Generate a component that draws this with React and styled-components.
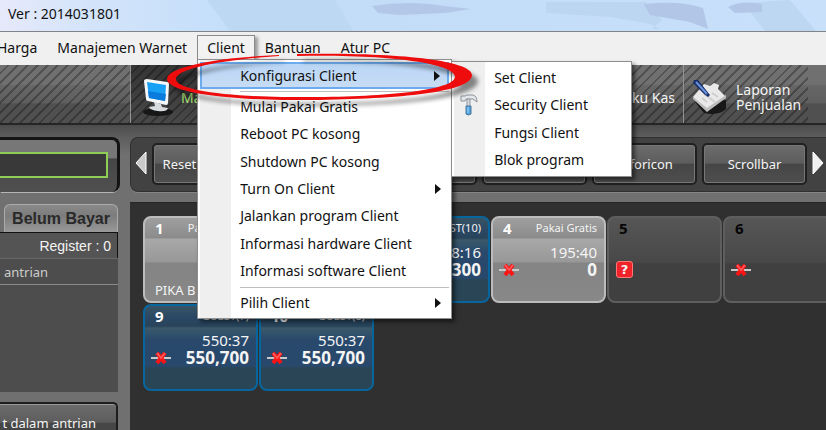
import React from "react";
import styled, { createGlobalStyle, css } from "styled-components";

const Global = createGlobalStyle`
  * { box-sizing: border-box; }
  body { margin: 0; overflow: hidden; background: #303030; }
  button, input { font: inherit; color: inherit; margin: 0; }
  svg { flex: none; }
`;

const Window = styled.div`
  min-height: 100vh;
  display: flex;
  flex-direction: column;
  font-family: "Noto Sans", "Open Sans", sans-serif;
  font-size: 14px;
  color: #111;
  overflow: hidden;
`;

const TitleBar = styled.header`
  position: relative;
  height: 32px;
  padding: 4px 8px;
  line-height: 20px;
  background: linear-gradient(90deg, #e6e9fa 0, #d3e4fa 90px, #c6dffa 210px, #c2dbf6 260px, #c8e0fa 100%);
  border-bottom: 1px solid #808488;
`;

const TitleGlass = styled.svg`
  position: absolute;
  inset: 0;
  width: 100%;
  height: 31px;
`;

const TitleText = styled.span`
  position: relative;
`;

const MenuBar = styled.nav`
  display: flex;
  align-items: flex-start;
  height: 33px;
  padding-top: 3px;
  background: #f0f0f0;
`;

const MenuSlot = styled.div`
  position: relative;
`;

const MenuButton = styled.button`
  height: 26px;
  padding: 0 9px;
  border: 1px solid transparent;
  background: none;
  line-height: 24px;
  white-space: nowrap;
  ${(p) => p.$clipped && css`padding-left: 0; margin-left: -4px;`}
  ${(p) => p.$open && css`
    border-color: #8a8a8a;
    border-bottom-color: #f2f2f2;
    background: #f2f2f2;
    box-shadow: 3px 2px 3px rgba(0, 0, 0, 0.35);
  `}
`;

const Menu = styled.div`
  position: absolute;
  top: 24px;
  left: 0;
  z-index: 5;
  width: 255px;
  padding: 2px;
  border: 1px solid #8e8e8e;
  background: linear-gradient(90deg, #fff 2px, #efefef 2px 33px, #fff 33px);
  box-shadow: 3px 3px 4px rgba(0, 0, 0, 0.5);
`;

const SubMenu = styled(Menu)`
  top: 1px;
  left: 253px;
  width: 181px;
`;

const MenuGroup = styled.div`
  display: grid;
  grid-auto-rows: 1fr;
  height: ${(p) => p.$height}px;
`;

const MenuItem = styled.button`
  display: flex;
  align-items: center;
  width: 100%;
  padding: 0 7px 0 0;
  border: 1px solid transparent;
  background: none;
  line-height: 20px;
  text-align: left;
  white-space: nowrap;
  ${(p) => p.$active && css`
    border: 2px solid #6cabee;
    background: linear-gradient(#bad6f6, #c7dcf4);
  `}
`;

const Gutter = styled.span`
  display: grid;
  place-items: center;
  flex: none;
  width: ${(p) => (p.$active ? 38 : 39)}px;
`;

const SubGutter = styled(Gutter)`
  width: 39px;
  padding-right: 12px;
`;

const ItemLabel = styled.span`
  flex: 1;
`;

const Separator = styled.hr`
  height: 1px;
  margin: 2px 0 1px 40px;
  border: 0;
  background: #bdbdbd;
`;

const Callout = styled.svg`
  position: absolute;
  top: -12px;
  left: -37px;
  z-index: 8;
  width: 330px;
  height: 64px;
  pointer-events: none;
  filter: drop-shadow(6px 6px 2px rgba(0, 0, 0, 0.45));
`;

const stripes = "repeating-linear-gradient(135deg, transparent 0 5px, rgba(0,0,0,0.28) 5px 7px)";

const Toolbar = styled.div`
  display: flex;
  height: 60px;
  background: linear-gradient(#707070 0 33%, #666 36%, #5f5f5f 65%, #505050 67%);
  border-bottom: 2px solid #252525;
  color: #f4f4f4;
`;

const ToolSpace = styled.div`
  width: ${(p) => (p.$width ? `${p.$width}px` : "auto")};
  flex: ${(p) => (p.$width ? "none" : "1")};
  background: ${(p) => (p.$plain ? "none" : stripes)};
`;

const ToolButton = styled.button`
  display: flex;
  align-items: center;
  gap: 8px;
  flex: none;
  width: ${(p) => p.$width}px;
  padding: 6px 8px 0;
  border: 0;
  border-left: 1px solid #929292;
  background: ${stripes};
  line-height: 15px;
  text-align: left;
  ${(p) => p.$active && css`
    gap: 4px;
    padding-left: 12px;
    color: #a5df6f;
    background: ${stripes}, linear-gradient(#353535, #484848);
  `}
  ${(p) => p.$end && css`justify-content: flex-end;`}
`;

const Body = styled.main`
  flex: 1;
  display: grid;
  grid-template-columns: 130px minmax(0, 1fr);
  background: linear-gradient(#4c4c4c, #5d5d5d 12px, #707070 30px);
  color: #f4f4f4;
`;

const Sidebar = styled.aside`
  display: flex;
  flex-direction: column;
  padding: 12px 10px 0 0;
`;

const SearchPanel = styled.label`
  display: block;
  height: 55px;
  padding: 12px 9px 13px 0;
  border: solid #141414;
  border-width: 3px 3px 0 0;
  border-radius: 0 8px 8px 0;
  box-shadow: 0 2px 0 -1px #b5b5b5;
  background: linear-gradient(#777 0 35%, #464646 36%, #505050);
  margin-bottom: 12px;
`;

const SearchInput = styled.input`
  display: block;
  width: 100%;
  height: 26px;
  padding: 0 4px;
  border: 2px solid #8fce55;
  border-left: 0;
  background: #393939;
  outline: 0;
`;

const PaidTab = styled.button`
  height: 28px;
  margin: 0 2px 0 4px;
  padding: 0;
  border: 1px solid #aaa;
  border-bottom: 0;
  border-radius: 6px 6px 0 0;
  background: linear-gradient(#8a8a8a, #7c7c7c 40%, #999);
  color: #292929;
  font: bold 16px/26px "Liberation Sans", sans-serif;
`;

const RegisterBar = styled.div`
  height: 26px;
  margin-right: 2px;
  padding-right: 6px;
  border: solid #111;
  border-width: 1px 1px 0 0;
  background: #545454;
  font: 14px/27px "Liberation Sans", sans-serif;
  text-align: right;
`;

const Queue = styled.div`
  height: 134px;
  margin: 0 2px 10px 0;
  border-top: 1px solid #686868;
  background: #4d4d4d;
`;

const QueueTitle = styled.div`
  height: 26px;
  padding-left: 4px;
  border-bottom: 1px solid #8b8b8b;
  color: #ccc;
  font-size: 13px;
  line-height: 26px;
`;

const glossy = "linear-gradient(#6c6c6c, #5d5d5d 48%, #464646 50%, #4e4e4e)";

const QueueButton = styled.button`
  display: flex;
  justify-content: flex-end;
  height: 28px;
  margin-right: 2px;
  padding: 0 20px 0 0;
  border: 2px solid #1d1d1d;
  border-left: 0;
  border-bottom: 0;
  border-radius: 0 5px 0 0;
  background: linear-gradient(#6c6c6c, #5d5d5d 70%, #464646 74%);
  box-shadow: inset 0 1px 0 #999;
  font-size: 13px;
  line-height: 38px;
  white-space: nowrap;
`;

const Content = styled.section`
  display: flex;
  flex-direction: column;
  min-width: 0;
`;

const Strip = styled.div`
  display: flex;
  align-items: center;
  gap: 5px;
  height: 55px;
  margin: 12px 0 10px;
  padding: 0 2px 0 4px;
  border: 1px solid #303030;
  border-right: 0;
  border-radius: 8px 0 0 8px;
  background: #424242;
  box-shadow: 0 1px 0 #858585;
`;

const ArrowButton = styled.button`
  flex: none;
  width: 12px;
  height: 24px;
  margin: 0 0 4px;
  padding: 0;
  border: 0;
  background: none;
  line-height: 0;
`;

const StripButton = styled.button`
  flex: 1 1 0;
  min-width: 0;
  height: 42px;
  margin-bottom: 2px;
  padding: 0;
  border: 2px solid #202020;
  border-radius: 5px;
  background: ${glossy};
  box-shadow: inset 0 0 0 1px #777;
  font-size: 13px;
  line-height: 36px;
  white-space: nowrap;
  overflow: hidden;
`;

const Board = styled.div`
  flex: 1;
  display: flex;
  flex-direction: column;
  gap: 1px;
  padding: 13px 0 0 13px;
  background: #303030;
  border-top: 1px solid #262626;
  overflow: hidden;
`;

const TileRow = styled.div`
  display: flex;
  gap: 1px;
`;

const tones = {
  free: css`
    border: 2px solid #bcbcbc;
    background: linear-gradient(#9f9f9f, #8b8b8b 20px, #a8a8a8 21px, #989898 44px, #848484 45px, #888);
  `,
  guest: css`
    border: 2px solid #08669e;
    background: linear-gradient(#385463, #2a4865 12px, #28435a 20px, #3b596a 22px, #29496c 34px, #29496c 60px, #294556 62px);
  `,
  idle: css`
    border: 2px solid #5e5e5e;
    background: linear-gradient(#565656, #484848 44px, #404040 46px);
  `,
};

const Tile = styled.article`
  flex: none;
  display: grid;
  grid-template-rows: 20px 23px 17px 1fr;
  width: 115px;
  height: 87px;
  padding: 0 7px 0 10px;
  border-radius: 8px;
  line-height: 18px;
  ${(p) => tones[p.$tone]}
`;

const TileHead = styled.div`
  display: flex;
  justify-content: space-between;
  align-items: center;
  font-size: 11px;
`;

const TileNumber = styled.strong`
  font-size: 15px;
  color: ${(p) => (p.$dark ? "#060606" : "#fff")};
`;

const TileTime = styled.div`
  align-self: end;
  font-size: 15px;
  text-align: right;
`;

const TileAmount = styled.div`
  display: flex;
  justify-content: space-between;
  align-items: center;
  margin-left: -4px;
  font-size: 17px;
  font-weight: 700;
`;

const TileUser = styled.div`
  align-self: center;
  font-size: 13px;
`;

const MoreArrow = () => (
  <svg width="6" height="10" viewBox="0 0 6 10" aria-hidden="true">
    <path d="M0 0L6 5L0 10Z" fill="#111" />
  </svg>
);

const HammerIcon = () => (
  <svg width="18" height="22" viewBox="0 0 18 22" aria-hidden="true">
    <path d="M1 2H5L7 1H13Q17 2 17 8L13 5H6L5 7H1Z" fill="#e3e7ea" stroke="#8a9298" />
    <path d="M7 5H10V13H7Z" fill="#d5d9dc" stroke="#91999f" />
    <path d="M6 12H11V20Q8 22 6 20Z" fill="#4aa0e0" stroke="#4c7698" />
    <path d="M8 13V19" stroke="#a6dafa" />
  </svg>
);

const MonitorIcon = () => (
  <svg width="34" height="38" viewBox="0 0 34 38" aria-hidden="true">
    <ellipse cx="15" cy="34" rx="15" ry="4" fill="#171717" />
    <path d="M11 24L18 26L19 29L25 30Q24 34 15 33Q7 32 6 29L12 28Z" fill="#d8dcdf" />
    <path d="M4 1L24 4Q26 4 26 6L25 25Q25 27 23 27L5 23Q3 23 3 21L1 3Q1 1 4 1Z" fill="#f5f7f8" />
    <path d="M4 4L23 7L22 23L6 20Z" fill="#18a1f4" />
    <path d="M5 13L23 16L22 23L6 20Z" fill="#087bdc" />
  </svg>
);

const NotepadIcon = () => (
  <svg width="36" height="38" viewBox="0 0 36 38" aria-hidden="true">
    <path d="M3 24L12 35Q27 38 34 31L34 22Z" fill="#181818" />
    <path d="M1 19L12 6L18 8L22 5L27 7L26 11L34 19L15 33Z" fill="#e9e9e9" />
    <path d="M1 19L15 30L34 17V20L15 34L1 21Z" fill="#bcbcbc" />
    <path d="M10 20L15 24M20 15L26 19M12 16L23 24" stroke="#cecece" strokeWidth="2" />
    <path d="M2 2L6 2L18 17L16 19L12 16L1 5Z" fill="#162f68" />
    <path d="M4 4L15 16" stroke="#6d92db" strokeWidth="2" />
  </svg>
);

const OfflineIcon = () => (
  <svg width="20" height="14" viewBox="0 0 20 14" role="img" aria-label="Offline">
    <path d="M0 7H20" stroke="#c9c9c9" strokeWidth="2" />
    <path d="M6 2L14 12M14 2L6 12" stroke="#fb1414" strokeWidth="4" />
    <path d="M6 2L10 7L14 2" stroke="#ff5656" strokeWidth="2" fill="none" />
  </svg>
);

const UnknownBadge = styled.span`
  width: 17px;
  height: 17px;
  margin-left: 1px;
  border: 1px solid #ff7777;
  border-radius: 3px;
  background: #ee2228;
  font: bold 13px/15px "DejaVu Sans", sans-serif;
  text-align: center;
`;

const ScrollArrow = ({ flip }) => (
  <svg width="12" height="24" viewBox="0 0 12 24" aria-hidden="true">
    <path
      d={flip ? "M1 1L11 12L1 23Z" : "M11 1L1 12L11 23Z"}
      fill={flip ? "#f1f1f1" : "#c9c9c9"}
      stroke="#fff"
    />
  </svg>
);

const clientItems = [
  ["Mulai Pakai Gratis"],
  ["Reboot PC kosong"],
  ["Shutdown PC kosong"],
  ["Turn On Client", true],
  ["Jalankan program Client"],
  ["Informasi hardware Client"],
  ["Informasi software Client"],
];

const configItems = [
  ["Set Client"],
  ["Security Client", <HammerIcon key="hammer" />],
  ["Fungsi Client"],
  ["Blok program"],
];

const tileRows = [
  [
    { n: 1, tone: "free", type: "Pakai Gratis", user: "PIKA B" },
    { n: 2, tone: "guest" },
    { n: 3, tone: "guest", type: "GUEST(10)", time: "78:16", amount: "78,300", status: "off" },
    { n: 4, tone: "free", type: "Pakai Gratis", time: "195:40", amount: "0", status: "off" },
    { n: 5, tone: "idle", status: "unknown" },
    { n: 6, tone: "idle", status: "off" },
  ],
  [
    { n: 9, tone: "guest", type: "GUEST(7)", time: "550:37", amount: "550,700", status: "off" },
    { n: 10, tone: "guest", type: "GUEST(8)", time: "550:37", amount: "550,700", status: "off" },
  ],
];

const ClientTile = ({ n, tone, type, time, amount, status, user }) => (
  <Tile $tone={tone}>
    <TileHead>
      <TileNumber $dark={tone === "idle"}>{n}</TileNumber>
      <span>{type}</span>
    </TileHead>
    <TileTime>{time}</TileTime>
    <TileAmount>
      {status === "off" && <OfflineIcon />}
      {status === "unknown" && <UnknownBadge>?</UnknownBadge>}
      <span>{amount}</span>
    </TileAmount>
    <TileUser>{user}</TileUser>
  </Tile>
);

const ClientMenu = () => (
  <Menu role="menu">
    <MenuGroup $height={27}>
      <MenuItem role="menuitem" $active>
        <Gutter $active />
        <ItemLabel>Konfigurasi Client</ItemLabel>
        <MoreArrow />
      </MenuItem>
    </MenuGroup>
    <Separator />
    <MenuGroup $height={192}>
      {clientItems.map(([label, more]) => (
        <MenuItem role="menuitem" key={label}>
          <Gutter />
          <ItemLabel>{label}</ItemLabel>
          {more && <MoreArrow />}
        </MenuItem>
      ))}
    </MenuGroup>
    <Separator />
    <MenuGroup $height={27}>
      <MenuItem role="menuitem">
        <Gutter />
        <ItemLabel>Pilih Client</ItemLabel>
        <MoreArrow />
      </MenuItem>
    </MenuGroup>
    <SubMenu role="menu">
      <MenuGroup $height={110}>
        {configItems.map(([label, icon]) => (
          <MenuItem role="menuitem" key={label}>
            <SubGutter>{icon}</SubGutter>
            <ItemLabel>{label}</ItemLabel>
          </MenuItem>
        ))}
      </MenuGroup>
    </SubMenu>
    <Callout viewBox="0 0 330 64" aria-hidden="true">
      <path
        fill="#ee0c0c"
        d="M118 7C62 9 6 18 6 31C6 45 70 53 150 52C240 51 311 44 311 27C311 13 242 4 136 6L136 8C230 6 295 16 294 29C293 42 226 49 150 49C75 50 15 43 15 31C15 20 66 11 118 8Z"
      />
    </Callout>
  </Menu>
);

export default function App() {
  return (
    <Window>
      <Global />
      <TitleBar>
        <TitleGlass viewBox="0 0 826 31" preserveAspectRatio="none" aria-hidden="true">
          <path d="M207 0H335L353 31H230Z" fill="#bdd8f3" />
          <path d="M372 6Q410 0 445 6L471 9L445 13L400 15L378 13Z" fill="#b3c8e8" />
          <path d="M546 2H646L662 20L652 29H660L650 24L610 17L546 13Z" fill="#bcd5f1" />
          <path d="M644 4Q680 0 703 8L708 29L690 22L650 15Z" fill="#b2c7e7" />
          <path d="M758 2L790 0L816 31H765L750 12Z" fill="#bdd6f2" />
          <path d="M728 7Q742 0 762 4V12L735 13Z" fill="#b2c7e7" />
        </TitleGlass>
        <TitleText>Ver : 2014031801</TitleText>
      </TitleBar>
      <MenuBar>
        <MenuButton $clipped>Harga</MenuButton>
        <MenuButton>Manajemen Warnet</MenuButton>
        <MenuSlot>
          <MenuButton $open aria-haspopup="menu" aria-expanded="true">Client</MenuButton>
          <ClientMenu />
        </MenuSlot>
        <MenuButton>Bantuan</MenuButton>
        <MenuButton>Atur PC</MenuButton>
      </MenuBar>
      <Toolbar>
        <ToolSpace $width={130} />
        <ToolButton $active $width={140}>
          <MonitorIcon />
          Manajemen
        </ToolButton>
        <ToolSpace />
        <ToolButton $width={120} $end>Buku Kas</ToolButton>
        <ToolButton $width={125}>
          <NotepadIcon />
          <span>Laporan<br />Penjualan</span>
        </ToolButton>
        <ToolSpace $width={18} $plain />
      </Toolbar>
      <Body>
        <Sidebar>
          <SearchPanel>
            <SearchInput aria-label="Cari" />
          </SearchPanel>
          <PaidTab>Belum Bayar</PaidTab>
          <RegisterBar>Register : 0</RegisterBar>
          <Queue>
            <QueueTitle>antrian</QueueTitle>
          </Queue>
          <QueueButton>t dalam antrian</QueueButton>
        </Sidebar>
        <Content>
          <Strip>
            <ArrowButton aria-label="Sebelumnya"><ScrollArrow /></ArrowButton>
            {["Reset Aplikasi", "Restart", "Shutdown", "Program", "Taforicon", "Scrollbar"].map((t) => (
              <StripButton key={t}>{t}</StripButton>
            ))}
            <ArrowButton aria-label="Berikutnya"><ScrollArrow flip /></ArrowButton>
          </Strip>
          <Board>
            {tileRows.map((row) => (
              <TileRow key={row[0].n}>
                {row.map((tile) => <ClientTile key={tile.n} {...tile} />)}
              </TileRow>
            ))}
          </Board>
        </Content>
      </Body>
    </Window>
  );
}
